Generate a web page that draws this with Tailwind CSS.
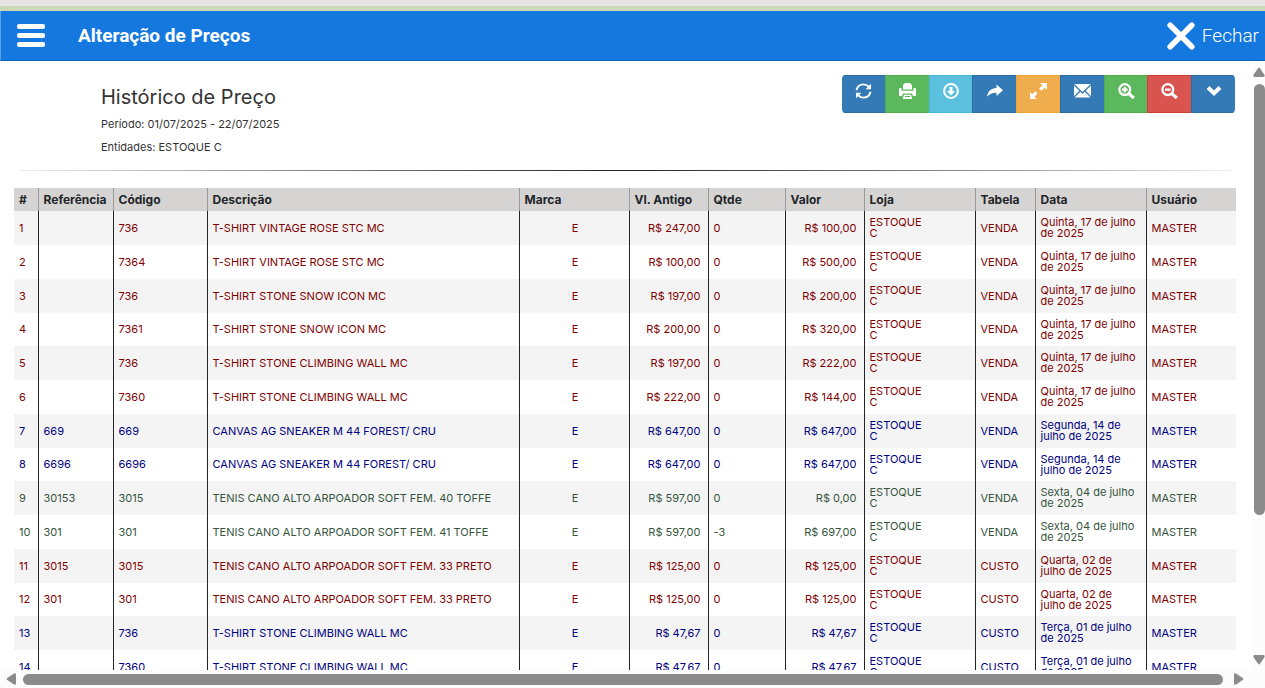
<!DOCTYPE html>
<html lang="pt-BR">
<head>
  <meta charset="UTF-8" />
  <meta name="viewport" content="width=device-width, initial-scale=1" />
  <title>Alteração de Preços</title>
  <script src="https://cdn.jsdelivr.net/npm/@tailwindcss/browser@4"></script>
</head>

<body class="h-screen flex flex-col overflow-hidden bg-white font-['Inter','Liberation_Sans',sans-serif] text-[#333]">

  <!-- Top strip -->
  <div class="h-[6px] shrink-0 bg-[#e5e5e5]"></div>
  <div class="h-[5px] shrink-0 bg-[#ccd9b4]"></div>

  <!-- Navbar -->
  <header class="flex items-center h-[50px] shrink-0 bg-[#1578df] border-b border-[#1062b8] border-l border-l-[#5aa2ea] pl-4 pr-[6px] text-white font-['Roboto','Liberation_Sans',sans-serif]">
    <button type="button" aria-label="Menu" class="flex flex-col gap-1 w-7">
      <span class="h-[5px] w-full rounded-xs bg-white"></span>
      <span class="h-[5px] w-full rounded-xs bg-white"></span>
      <span class="h-[5px] w-full rounded-xs bg-white"></span>
    </button>
    <h1 class="ml-[33px] flex-1 text-[19px] leading-7 font-bold">Alteração de Preços</h1>
    <button type="button" class="flex items-center gap-[7px] text-[19px] leading-7 font-light">
      <svg class="size-7" viewBox="0 0 28 28" stroke="#fff" stroke-width="5.6" stroke-linecap="round"><path d="M3.2 3.2 24.8 24.8M24.8 3.2 3.2 24.8" /></svg>
      Fechar
    </button>
  </header>

  <div class="flex flex-1 min-h-0">

    <!-- Main Content -->
    <main class="flex-1 min-w-0 overflow-hidden pl-[14px] pr-[17px] pt-[14px]">

      <div class="flex justify-between items-start">
        <div class="pl-[87px] pt-2">
          <h2 class="text-[20px] leading-7">Histórico de Preço</h2>
          <p class="mt-[2px] text-[11px] leading-[23px]">Período: 01/07/2025 - 22/07/2025</p>
          <p class="text-[11px] leading-[23px]">Entidades: ESTOQUE C</p>
        </div>

        <!-- Toolbar -->
        <div class="flex w-[393px] h-[38px] mr-px rounded overflow-hidden text-white">
          <button type="button" aria-label="Atualizar" class="flex-1 flex justify-center pt-[7px] bg-[#337ab7] border-y border-[#2e6da4]">
            <svg class="w-[17px] h-4" viewBox="0 0 17 16" fill="none" stroke="currentColor" stroke-width="1.900"><path d="M1.500 7.200C2.200 3.800 5 1.400 8.500 1.400 10.600 1.400 12.400 2.300 13.700 3.700M15.500 8.800C14.800 12.200 12 14.600 8.500 14.600 6.400 14.600 4.600 13.700 3.300 12.300" /><path d="M16 .8V6.200H10.600ZM1 15.200V9.800H6.400Z" fill="currentColor" stroke="none" /></svg>
          </button>
          <button type="button" aria-label="Imprimir" class="flex-1 flex justify-center pt-[7px] bg-[#5cb85c] border-y border-l border-[#4cae4c]">
            <svg class="w-[17px] h-4" viewBox="0 0 17 16" fill="currentColor"><path d="M6 0h5l2 2v4.500H4V2ZM0 6q0-1 1-1h1.500v2.700h12V5H16q1 0 1 1v7h-3l-1-2.500H4L3 13H0ZM5 11.700h7l1.300 4.300H3.700ZM5.900 13v1h5.200v-1Z" fill-rule="evenodd" /></svg>
          </button>
          <button type="button" aria-label="Baixar" class="flex-1 flex justify-center pt-[7px] bg-[#5bc0de] border-y border-l border-[#46b8da]">
            <svg class="size-4" viewBox="0 0 16 16"><circle cx="8" cy="8" r="6.900" fill="none" stroke="currentColor" stroke-width="2" /><path d="M6.500 4h3v4h2.500L8 12.400 4 8h2.500Z" fill="currentColor" /></svg>
          </button>
          <button type="button" aria-label="Compartilhar" class="flex-1 flex justify-center pt-[7px] bg-[#337ab7] border-y border-l border-[#2e6da4]">
            <svg class="size-4" viewBox="0 0 16 16" fill="currentColor"><path d="M9.500 1.500 16 7.300 9.500 13V9.700C5.500 9.600 2.500 10.800 0 13.800 .7 8.500 4 5.300 9.500 4.900Z" /></svg>
          </button>
          <button type="button" aria-label="Tela cheia" class="flex-1 flex justify-center pt-[7px] bg-[#f0ad4e] border-y border-l border-[#eea236]">
            <svg class="w-[17px] h-4" viewBox="0 0 17 16" fill="currentColor"><path d="M10 0h7v7l-2.200-2.200-3.300 3-2.300-2.300 3.100-3.200ZM0 16V9l2.200 2.200 3-3 2.300 2.300-3.100 3.200L7 16Z" /></svg>
          </button>
          <button type="button" aria-label="Enviar e-mail" class="flex-1 flex justify-center pt-[7px] bg-[#337ab7] border-y border-l border-[#2e6da4]">
            <svg class="w-[17px] h-4" viewBox="0 0 17 16" fill="currentColor"><path d="M.3 1h16.400L8.500 9ZM0 2.500 5.300 7.800 0 13.200ZM17 2.500v10.700l-5.300-5.400ZM6.300 8.800l2.200 2.100 2.200-2.100L16.500 14.500H.5Z" /></svg>
          </button>
          <button type="button" aria-label="Aumentar zoom" class="flex-1 flex justify-center pt-[7px] bg-[#5cb85c] border-y border-l border-[#4cae4c]">
            <svg class="w-[17px] h-4" viewBox="0 0 17 16"><circle cx="6.800" cy="6.600" r="5.400" fill="none" stroke="currentColor" stroke-width="2.300" /><path d="M10.800 10.600 15.800 15" stroke="currentColor" stroke-width="3.200" /><path d="M5.700 3.800h2.200v1.700h1.700v2.200H7.900v1.700H5.700V7.700H4V5.500h1.700Z" fill="currentColor" /></svg>
          </button>
          <button type="button" aria-label="Diminuir zoom" class="flex-1 flex justify-center pt-[7px] bg-[#d9534f] border-y border-l border-[#d43f3a]">
            <svg class="w-[17px] h-4" viewBox="0 0 17 16"><circle cx="6.800" cy="6.600" r="5.400" fill="none" stroke="currentColor" stroke-width="2.300" /><path d="M10.800 10.600 15.800 15" stroke="currentColor" stroke-width="3.200" /><path d="M4 5.500h5.600v2.200H4Z" fill="currentColor" /></svg>
          </button>
          <button type="button" aria-label="Mais opções" class="flex-1 flex justify-center pt-[7px] bg-[#337ab7] border-y border-l border-[#2e6da4]">
            <svg class="size-4" viewBox="0 0 16 16" fill="none" stroke="currentColor" stroke-width="4"><path d="M2 4.500 8 10.300 14 4.500" /></svg>
          </button>
        </div>
      </div>

      <div class="h-px mt-[11px] mb-[17px] ml-[5px] mr-[5px] bg-linear-to-r from-[#eee] via-[#222] to-[#eee]"></div>

      <!-- Price history -->
      <table class="w-full table-fixed text-[11px] leading-[11px]">
        <colgroup>
          <col class="w-[24px]" />
          <col class="w-[75px]" />
          <col class="w-[94px]" />
          <col class="w-[312px]" />
          <col class="w-[110px]" />
          <col class="w-[79px]" />
          <col class="w-[77px]" />
          <col class="w-[79px]" />
          <col class="w-[111px]" />
          <col class="w-[60px]" />
          <col class="w-[111px]" />
          <col class="w-[90px]" />
        </colgroup>
        <thead class="bg-[#d6d4d2] text-[12px] text-[#212529] text-left">
          <tr class="h-[23px] *:pl-[5px] *:border-l *:border-[#999] *:first:border-l-0">
            <th>#</th>
            <th>Referência</th>
            <th>Código</th>
            <th>Descrição</th>
            <th>Marca</th>
            <th>Vl. Antigo</th>
            <th>Qtde</th>
            <th>Valor</th>
            <th>Loja</th>
            <th>Tabela</th>
            <th>Data</th>
            <th>Usuário</th>
          </tr>
        </thead>
        <tbody id="rows"></tbody>
      </table>
    </main>

    <!-- Vertical scrollbar -->
    <div class="flex flex-col items-center w-3 shrink-0 pt-[6px] pb-[5px] bg-[#fcfcfc]" aria-hidden="true">
      <svg class="w-3 h-[10px] shrink-0" viewBox="0 0 12 10" fill="#8b8b8b"><path d="M5 1.200Q6 0 7 1.200L11.600 8Q12 10 10.500 10H1.500Q0 10 .4 8Z" /></svg>
      <div class="flex flex-col flex-1 w-[11px] mt-[7px] mb-1">
        <div class="basis-[76%] rounded-full bg-[#8b8b8b]"></div>
      </div>
      <svg class="w-3 h-[10px] shrink-0" viewBox="0 0 12 10" fill="#8b8b8b"><path d="M5 8.800Q6 10 7 8.800L11.600 2Q12 0 10.500 0H1.500Q0 0 .4 2Z" /></svg>
    </div>
  </div>

  <!-- Horizontal scrollbar -->
  <div class="flex items-center h-[18px] shrink-0 pl-[6px] pr-[21px] bg-[#fcfcfc]" aria-hidden="true">
    <svg class="w-[10px] h-3" viewBox="0 0 10 12" fill="#8b8b8b"><path d="M1.200 5Q0 6 1.200 7L8 11.600Q10 12 10 10.500V1.500Q10 0 8 .4Z" /></svg>
    <div class="flex-1 h-[11px] ml-[7px] mr-[11px] rounded-full bg-[#8b8b8b]"></div>
    <svg class="w-[10px] h-3" viewBox="0 0 10 12" fill="#8b8b8b"><path d="M8.800 5Q10 6 8.800 7L2 11.600Q0 12 0 10.500V1.500Q0 0 2 .4Z" /></svg>
  </div>

  <script>
    const colors = { red: 'text-[#800000]', blue: 'text-[#000080]', green: 'text-[#34553c]' };

    // color, referência, código, descrição, vl. antigo, qtde, valor, tabela, data
    const items = [
      ['red', '', '736', 'T-SHIRT VINTAGE ROSE STC MC', 'R$ 247,00', '0', 'R$ 100,00', 'VENDA', 'Quinta, 17 de julho de 2025'],
      ['red', '', '7364', 'T-SHIRT VINTAGE ROSE STC MC', 'R$ 100,00', '0', 'R$ 500,00', 'VENDA', 'Quinta, 17 de julho de 2025'],
      ['red', '', '736', 'T-SHIRT STONE SNOW ICON MC', 'R$ 197,00', '0', 'R$ 200,00', 'VENDA', 'Quinta, 17 de julho de 2025'],
      ['red', '', '7361', 'T-SHIRT STONE SNOW ICON MC', 'R$ 200,00', '0', 'R$ 320,00', 'VENDA', 'Quinta, 17 de julho de 2025'],
      ['red', '', '736', 'T-SHIRT STONE CLIMBING WALL MC', 'R$ 197,00', '0', 'R$ 222,00', 'VENDA', 'Quinta, 17 de julho de 2025'],
      ['red', '', '7360', 'T-SHIRT STONE CLIMBING WALL MC', 'R$ 222,00', '0', 'R$ 144,00', 'VENDA', 'Quinta, 17 de julho de 2025'],
      ['blue', '669', '669', 'CANVAS AG SNEAKER M 44 FOREST/ CRU', 'R$ 647,00', '0', 'R$ 647,00', 'VENDA', 'Segunda, 14 de julho de 2025'],
      ['blue', '6696', '6696', 'CANVAS AG SNEAKER M 44 FOREST/ CRU', 'R$ 647,00', '0', 'R$ 647,00', 'VENDA', 'Segunda, 14 de julho de 2025'],
      ['green', '30153', '3015', 'TENIS CANO ALTO ARPOADOR SOFT FEM. 40 TOFFE', 'R$ 597,00', '0', 'R$ 0,00', 'VENDA', 'Sexta, 04 de julho de 2025'],
      ['green', '301', '301', 'TENIS CANO ALTO ARPOADOR SOFT FEM. 41 TOFFE', 'R$ 597,00', '-3', 'R$ 697,00', 'VENDA', 'Sexta, 04 de julho de 2025'],
      ['red', '3015', '3015', 'TENIS CANO ALTO ARPOADOR SOFT FEM. 33 PRETO', 'R$ 125,00', '0', 'R$ 125,00', 'CUSTO', 'Quarta, 02 de julho de 2025'],
      ['red', '301', '301', 'TENIS CANO ALTO ARPOADOR SOFT FEM. 33 PRETO', 'R$ 125,00', '0', 'R$ 125,00', 'CUSTO', 'Quarta, 02 de julho de 2025'],
      ['blue', '', '736', 'T-SHIRT STONE CLIMBING WALL MC', 'R$ 47,67', '0', 'R$ 47,67', 'CUSTO', 'Terça, 01 de julho de 2025'],
      ['blue', '', '7360', 'T-SHIRT STONE CLIMBING WALL MC', 'R$ 47,67', '0', 'R$ 47,67', 'CUSTO', 'Terça, 01 de julho de 2025']
    ];

    document.getElementById('rows').innerHTML = items.map(([color, ref, code, desc, oldPrice, qty, price, list, date], i) => `
      <tr class="h-[34px] nth-[4n]:h-[33px] odd:bg-[#f4f4f4] *:pl-[5px] *:pr-[7px] *:first:pr-0 *:border-l *:border-[#212529] *:first:border-l-0 ${colors[color]}">
        <td>${i + 1}</td>
        <td>${ref}</td>
        <td>${code}</td>
        <td>${desc}</td>
        <td><div class="pl-1 text-center">E</div></td>
        <td class="text-right">${oldPrice}</td>
        <td>${qty}</td>
        <td class="text-right">${price}</td>
        <td>ESTOQUE<br>C</td>
        <td>${list}</td>
        <td>${date}</td>
        <td>MASTER</td>
      </tr>
    `).join('');
  </script>

</body>
</html>
